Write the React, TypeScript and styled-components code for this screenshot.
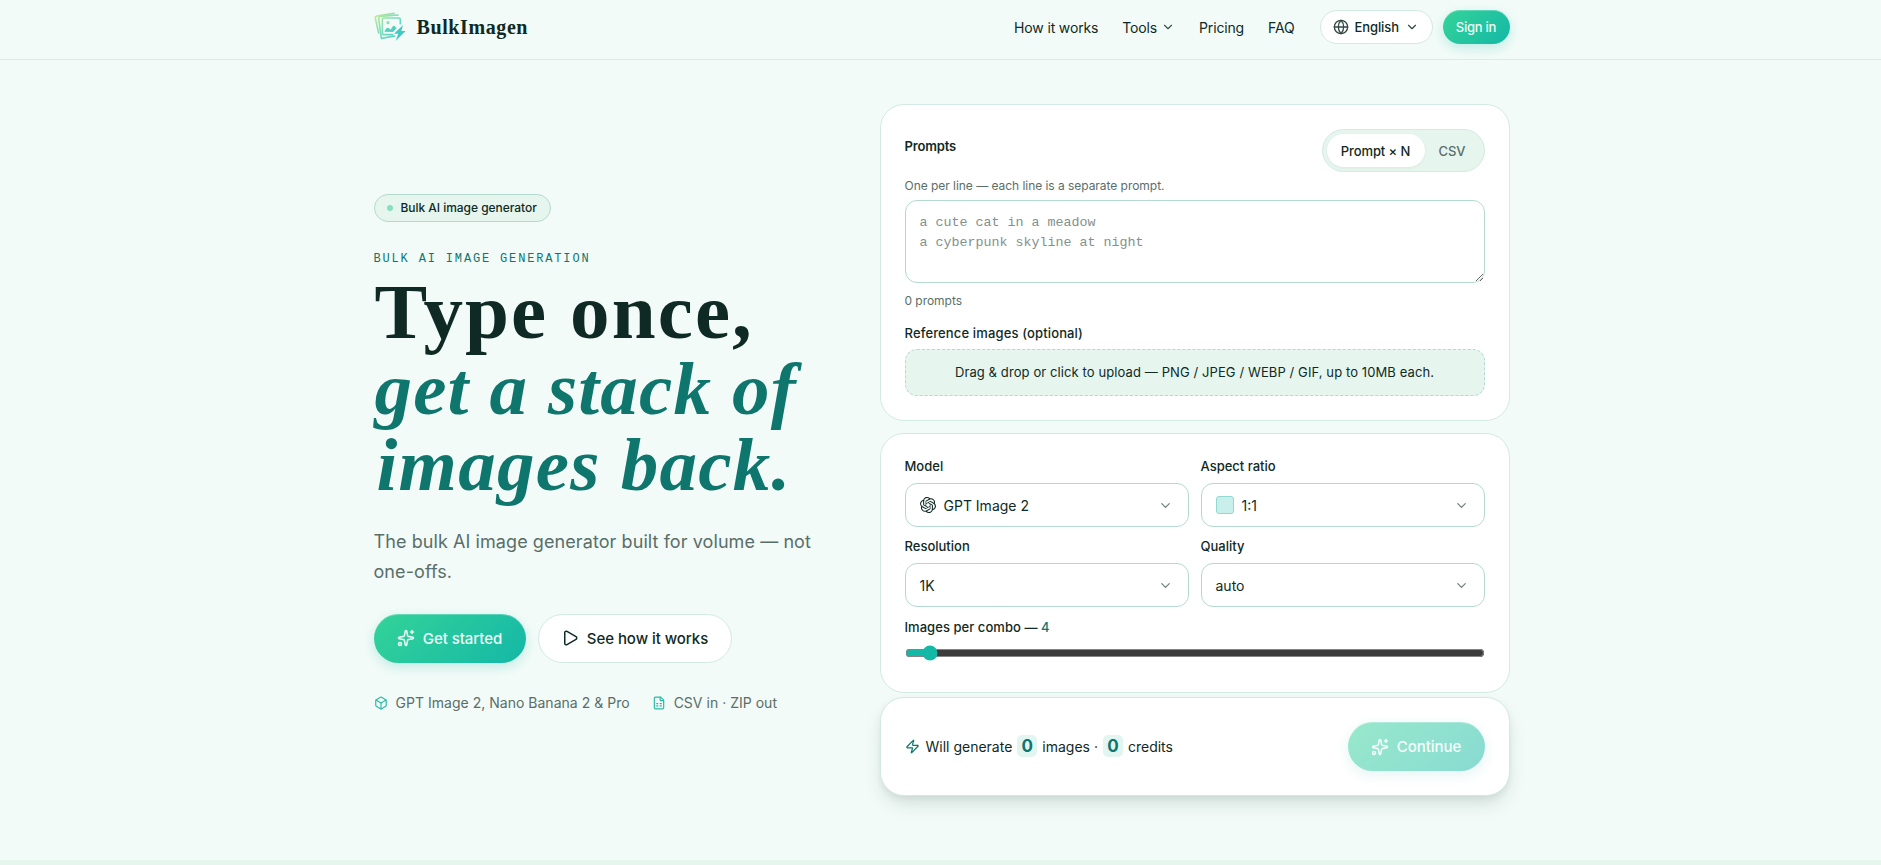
import React from "react";
import styled, { createGlobalStyle, css } from "styled-components";
import { Box, ChevronDown, FileSpreadsheet, Globe, Play, Sparkles, Zap } from "lucide-react";
import { SiOpenai } from "react-icons/si";

const c = {
  bg: "#f2fbf8",
  mint: "#e6f6ef",
  line: "#d3eae2",
  lineStrong: "#b3dacd",
  ink: "#0f2a24",
  muted: "#5a6e69",
  deep: "#0f766e",
  teal: "#14b8a6",
};

const GlobalStyle = createGlobalStyle`
  *, *::before, *::after { box-sizing: border-box; }
  body {
    margin: 0;
    padding-left: 2px;
    height: 865px;
    overflow: hidden;
    background: ${c.bg};
    color: ${c.ink};
    font-family: Inter, "Liberation Sans", sans-serif;
    font-size: 14px;
  }
  h1, p { margin: 0; }
  button, textarea { font: inherit; color: inherit; }
`;

const Container = styled.div`
  width: 1136px;
  margin: 0 auto;
`;

const Header = styled.header`
  height: 60px;
  margin-left: -2px;
  padding: 10px 0 0 2px;
  border-bottom: 1px solid #dcebe6;
`;

const HeaderRow = styled(Container)`
  display: flex;
  align-items: center;
  height: 34px;
`;

const Brand = styled.a`
  display: flex;
  align-items: center;
  gap: 11px;
  margin-right: auto;
  font: 700 20px/34px "Liberation Serif", serif;
  letter-spacing: 0.6px;
`;

const Nav = styled.nav`
  display: flex;
  align-items: center;
  gap: 24px;
  letter-spacing: -0.15px;
`;

const NavLink = styled.a`
  display: flex;
  align-items: center;
  gap: 4px;
  svg { opacity: 0.8; }
`;

const gradient = css`
  border: 0;
  background: linear-gradient(135deg, #34d399, ${c.teal});
  color: #effdf8;
  box-shadow: inset 0 1px 0 rgba(255, 255, 255, 0.25), 0 4px 12px rgba(20, 184, 166, 0.22);
`;

const LanguageButton = styled.button`
  display: flex;
  align-items: center;
  width: 113px;
  height: 34px;
  margin: 0 10px 0 25px;
  padding: 0 13px 0 12px;
  border: 1px solid ${c.line};
  border-radius: 17px;
  background: #fff;
  font-size: 13px;
  font-weight: 500;
  letter-spacing: -0.1px;
  span { margin: 0 auto 0 6px; }
  svg { opacity: 0.85; }
`;

const SignInButton = styled.button`
  ${gradient}
  width: 67px;
  height: 34px;
  padding: 0;
  border-radius: 17px;
  font-size: 13px;
  font-weight: 500;
  letter-spacing: -0.25px;
`;

const Hero = styled(Container)`
  display: grid;
  grid-template-columns: 450px 630px;
  justify-content: space-between;
  padding-top: 44px;
  height: 800px;
`;

const Intro = styled.section`
  padding-top: 90px;
`;

const Tag = styled.div`
  display: flex;
  align-items: center;
  gap: 8px;
  width: 177px;
  height: 28px;
  padding: 0 0 1px 12px;
  border: 1px solid ${c.lineStrong};
  border-radius: 14px;
  background: ${c.mint};
  font-size: 12px;
  font-weight: 500;
  letter-spacing: -0.04px;
  white-space: nowrap;
  &::before {
    content: "";
    width: 6px;
    height: 6px;
    border-radius: 50%;
    background: #86dfbd;
  }
`;

const Eyebrow = styled.p`
  margin-top: 27px;
  color: ${c.deep};
  font: 400 12px/20px "Liberation Mono", monospace;
  letter-spacing: 1.84px;
  text-transform: uppercase;
`;

const Title = styled.h1`
  margin-top: 5px;
  padding-left: 1px;
  font: 700 79px/76.5px "Liberation Serif", serif;
  letter-spacing: 2.1px;
  white-space: nowrap;
`;

const TitleAccent = styled.em<{ $spacing: number; $indent?: number }>`
  display: block;
  padding-left: ${(p) => p.$indent ?? 0}px;
  color: ${c.deep};
  font-size: 75px;
  letter-spacing: ${(p) => p.$spacing}px;
`;

const Lead = styled.p`
  margin-top: 23px;
  color: ${c.muted};
  font-size: 18px;
  line-height: 30px;
  letter-spacing: 0.08px;
`;

const Actions = styled.div`
  display: flex;
  gap: 12px;
  margin-top: 27px;
`;

const ActionButton = styled.button<{ $primary?: boolean; $width: number }>`
  display: flex;
  align-items: center;
  justify-content: center;
  gap: 8px;
  width: ${(p) => p.$width}px;
  height: 49px;
  padding: 0;
  border: 1px solid ${c.line};
  border-radius: 25px;
  background: #fff;
  font-size: 15px;
  font-weight: 500;
  letter-spacing: -0.05px;
  ${(p) => p.$primary && gradient}
  &:disabled { opacity: 0.5; }
`;

const Facts = styled.div`
  display: flex;
  gap: 22px;
  margin-top: 30px;
  color: ${c.muted};
  line-height: 20px;
`;

const Fact = styled.span`
  display: flex;
  align-items: center;
  gap: 8px;
  letter-spacing: 0.02px;
  svg { color: #2bb9a6; }
`;

const Composer = styled.section`
  display: flex;
  flex-direction: column;
`;

const Card = styled.div<{ $height: number; $gap?: number }>`
  height: ${(p) => p.$height}px;
  margin-bottom: ${(p) => p.$gap ?? 0}px;
  padding: 24px;
  border: 1px solid ${c.line};
  border-radius: 24px;
  background: #fff;
`;

const SummaryCard = styled(Card)`
  display: flex;
  align-items: center;
  justify-content: space-between;
  box-shadow: 0 10px 20px -4px rgba(15, 42, 36, 0.15), 0 3px 6px rgba(15, 42, 36, 0.05);
`;

const CardHead = styled.div`
  display: flex;
  justify-content: space-between;
  height: 43px;
  margin-bottom: 6px;
`;

const Label = styled.div`
  height: 16px;
  font-size: 13px;
  font-weight: 500;
  line-height: 16px;
`;

const PromptsLabel = styled(Label)`
  margin-top: 9px;
  font-weight: 600;
  letter-spacing: -0.15px;
`;

const Segmented = styled.div`
  display: flex;
  width: 163px;
  padding: 4px;
  border: 1px solid ${c.line};
  border-radius: 22px;
  background: ${c.mint};
`;

const Segment = styled.button<{ $active?: boolean }>`
  width: ${(p) => (p.$active ? 98 : 55)}px;
  padding: 0;
  border: 0;
  border-radius: 17px;
  background: ${(p) => (p.$active ? "#fff" : "transparent")};
  color: ${(p) => (p.$active ? c.ink : c.muted)};
  box-shadow: ${(p) => (p.$active ? "0 1px 3px rgba(15, 42, 36, 0.06)" : "none")};
  font-size: 13px;
  font-weight: 500;
  letter-spacing: -0.1px;
`;

const Hint = styled.p`
  color: ${c.muted};
  font-size: 12px;
  line-height: 16px;
  letter-spacing: -0.04px;
`;

const PromptInput = styled.textarea`
  display: block;
  width: 580px;
  height: 83px;
  margin: 6px 0 10px;
  padding: 12px 14px;
  border: 1px solid ${c.lineStrong};
  border-radius: 12px;
  background: #fff;
  font: 13.33px/20px "Liberation Mono", monospace;
  resize: vertical;
  &::placeholder { color: #84908d; }
`;

const UploadLabel = styled(Label)`
  margin: 16px 0 8px;
  letter-spacing: 0.14px;
`;

const DropZone = styled.div`
  display: grid;
  place-items: center;
  height: 47px;
  padding-bottom: 2px;
  border: 1px dashed ${c.lineStrong};
  border-radius: 12px;
  background: ${c.mint};
  font-size: 13px;
  letter-spacing: 0.1px;
`;

const Fields = styled.div`
  display: grid;
  grid-template-columns: 1fr 1fr;
  gap: 11px 12px;
`;

const SelectBox = styled.div`
  display: flex;
  align-items: center;
  gap: 8px;
  height: 44px;
  margin-top: 9px;
  padding: 0 15px 0 14px;
  border: 1px solid ${c.lineStrong};
  border-radius: 12px;
  & > svg:last-child { margin-left: auto; color: #71807c; }
`;

const RatioSwatch = styled.i`
  width: 18px;
  height: 18px;
  border: 1px solid #93d8d0;
  border-radius: 3px;
  background: #c9efec;
`;

const SliderLabel = styled(Label)`
  margin-top: 12px;
  letter-spacing: 0.05px;
  span { color: ${c.deep}; }
`;

const Slider = styled.input`
  display: block;
  width: 580px;
  height: 16px;
  margin: 10px 0 0;
  accent-color: ${c.teal};
`;

const Summary = styled.div`
  display: flex;
  align-items: center;
  svg { margin-right: 6px; color: ${c.deep}; }
`;

const Count = styled.b`
  width: 20px;
  height: 22px;
  margin: -2px 5px 0;
  border-radius: 5px;
  background: #e2f5f1;
  color: ${c.deep};
  font-size: 17px;
  font-weight: 700;
  line-height: 22px;
  text-align: center;
`;

const NextSection = styled.div`
  height: 5px;
  margin-left: -2px;
  background: ${c.mint};
`;

function Logo() {
  return (
    <svg width="32" height="32" viewBox="0 0 96 96" fill="none">
      <defs>
        <linearGradient id="brand" x1="0" y1="8" x2="80" y2="86" gradientUnits="userSpaceOnUse">
          <stop stopColor="#c3ec8d" />
          <stop offset="0.5" stopColor="#7bdcc0" />
          <stop offset="1" stopColor="#42c9c3" />
        </linearGradient>
      </defs>
      <g stroke="url(#brand)" strokeWidth="5" strokeLinejoin="round" strokeLinecap="round">
        <path d="M60 7 L8 15 Q3 17 4 22 L14 66" />
        <path d="M72 12 L19 16 Q14 17 14 22 L22 82 L62 75" />
        <path d="M79 38 V27 Q79 21 74 21 H30 Q25 21 25 27 V65 Q25 71 30 71 H56" />
      </g>
      <circle cx="42" cy="35" r="5" fill="#8be0b2" />
      <path d="M31 62 Q39 45 45 52 L50 56 L57 45 Q60 42 64 47 L68 52 L57 63 Z" fill="#54d0c2" />
      <path d="M87 42 L60 68 H73 L65 90 L95 60 H82 Z" fill="#43c9c4" />
    </svg>
  );
}

function Field({ label, icon, value }: { label: string; icon?: React.ReactNode; value: string }) {
  return (
    <div>
      <Label>{label}</Label>
      <SelectBox>
        {icon}
        <span>{value}</span>
        <ChevronDown size={15} />
      </SelectBox>
    </div>
  );
}

export default function App() {
  return (
    <>
      <GlobalStyle />
      <Header>
        <HeaderRow>
          <Brand><Logo />BulkImagen</Brand>
          <Nav>
            <NavLink>How it works</NavLink>
            <NavLink>Tools <ChevronDown size={14} /></NavLink>
            <NavLink>Pricing</NavLink>
            <NavLink>FAQ</NavLink>
          </Nav>
          <LanguageButton>
            <Globe size={16} />
            <span>English</span>
            <ChevronDown size={14} />
          </LanguageButton>
          <SignInButton>Sign in</SignInButton>
        </HeaderRow>
      </Header>
      <Hero>
        <Intro>
          <Tag>Bulk AI image generator</Tag>
          <Eyebrow>Bulk AI image generation</Eyebrow>
          <Title>
            Type once,
            <TitleAccent $spacing={1.15}>get a stack of</TitleAccent>
            <TitleAccent $spacing={1.25} $indent={2}>images back.</TitleAccent>
          </Title>
          <Lead>The bulk AI image generator built for volume — not one-offs.</Lead>
          <Actions>
            <ActionButton $primary $width={152}><Sparkles size={18} />Get started</ActionButton>
            <ActionButton $width={194}><Play size={18} />See how it works</ActionButton>
          </Actions>
          <Facts>
            <Fact><Box size={14} />GPT Image 2, Nano Banana 2 &amp; Pro</Fact>
            <Fact><FileSpreadsheet size={14} />CSV in · ZIP out</Fact>
          </Facts>
        </Intro>
        <Composer>
          <Card $height={317} $gap={12}>
            <CardHead>
              <PromptsLabel>Prompts</PromptsLabel>
              <Segmented>
                <Segment $active>Prompt × N</Segment>
                <Segment>CSV</Segment>
              </Segmented>
            </CardHead>
            <Hint>One per line — each line is a separate prompt.</Hint>
            <PromptInput placeholder={"a cute cat in a meadow\na cyberpunk skyline at night"} />
            <Hint>0 prompts</Hint>
            <UploadLabel>Reference images (optional)</UploadLabel>
            <DropZone>Drag &amp; drop or click to upload — PNG / JPEG / WEBP / GIF, up to 10MB each.</DropZone>
          </Card>
          <Card $height={260} $gap={4}>
            <Fields>
              <Field label="Model" icon={<SiOpenai size={16} />} value="GPT Image 2" />
              <Field label="Aspect ratio" icon={<RatioSwatch />} value="1:1" />
              <Field label="Resolution" value="1K" />
              <Field label="Quality" value="auto" />
            </Fields>
            <SliderLabel>Images per combo — <span>4</span></SliderLabel>
            <Slider type="range" min={1} max={100} defaultValue={4} />
          </Card>
          <SummaryCard $height={99}>
            <Summary>
              <Zap size={15} />Will generate<Count>0</Count>images ·<Count>0</Count>credits
            </Summary>
            <ActionButton $primary $width={137} disabled><Sparkles size={18} />Continue</ActionButton>
          </SummaryCard>
        </Composer>
      </Hero>
      <NextSection />
    </>
  );
}
